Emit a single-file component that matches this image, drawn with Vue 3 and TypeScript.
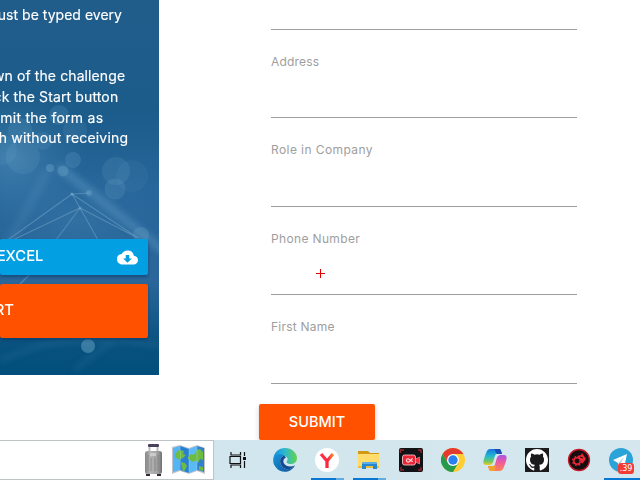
<script setup lang="ts">
interface Line { text: string; end: number; spacing: number; gap?: boolean }
const lines: Line[] = [
  { text: 'spreadsheet record must be typed every', end: 122, spacing: 0.02 },
  { text: 'The actual countdown of the challenge', end: 125.2, spacing: 0.1, gap: true },
  { text: 'will begin when you click the Start button', end: 118.3, spacing: 0.13 },
  { text: 'until then you may submit the form as', end: 103.3, spacing: 0.25 },
  { text: 'many times as you wish without receiving', end: 128.2, spacing: 0.18 },
]
interface Field { label: string; height: number; spacing: number }
const fields: Field[] = [
  { label: 'Address', height: 88, spacing: 0.2 },
  { label: 'Role in Company', height: 89, spacing: 0.42 },
  { label: 'Phone Number', height: 88, spacing: 0.35 },
  { label: 'First Name', height: 89, spacing: 0.22 },
]
const dots = [
  [59, 115, 10, .16], [75, 130, 12, .12], [20, 130, 12, .13], [43, 141, 9, .12], [23, 157, 17, .12],
  [50, 168, 4, .3], [63, 171, 5.5, .25], [73, 160, 8, .17], [116, 171, 14, .13], [132, 176, 16, .07],
  [115, 189, 10.5, .15], [141, 235, 8, .2], [88, 346, 7, .4], [2, 150, 15, .1],
]
</script>

<template>
  <div class="screen">
    <main class="page">
      <aside class="instructions">
        <svg class="backdrop" width="159" height="375" viewBox="0 0 159 375">
          <defs>
            <linearGradient id="sea" x1="0" y1="0" x2="0" y2="1">
              <stop offset="0" stop-color="#215d8b" /><stop offset=".3" stop-color="#1b5c8b" />
              <stop offset=".5" stop-color="#27669a" /><stop offset=".75" stop-color="#2a669a" />
              <stop offset=".93" stop-color="#07517d" /><stop offset="1" stop-color="#024f7b" />
            </linearGradient>
            <radialGradient id="haze"><stop stop-color="#62a1cb" stop-opacity=".42" /><stop offset="1" stop-color="#4788b6" stop-opacity="0" /></radialGradient>
            <filter id="soft"><feGaussianBlur stdDeviation="3" /></filter>
            <filter id="edge"><feGaussianBlur stdDeviation=".45" /></filter>
          </defs>
          <rect width="159" height="375" fill="url(#sea)" />
          <ellipse cx="12" cy="158" rx="75" ry="67" fill="url(#haze)" />
          <ellipse cx="76" cy="220" rx="85" ry="55" fill="url(#haze)" opacity=".4" />
          <g stroke="#70abd0" fill="none" filter="url(#soft)">
            <path d="M58 166 165 252" stroke-width="9" opacity=".32" />
            <path d="M49 169 8 244" stroke-width="9" opacity=".15" />
            <path d="M0 361q72-35 160-15M74 370 114 340" stroke-width="5" opacity=".13" />
          </g>
          <g stroke="#8dbad9" fill="none" opacity=".38" filter="url(#edge)">
            <path d="M72 194-2 247M72 194l8 14 18 32M80 208-2 247M80 208 56 240M72 194l66 44M80 208l58 30M72 194l17-1" stroke-width="1.1" />
            <path d="M20 284 34 270" stroke-width="1.5" />
          </g>
          <g fill="#83b9d9" filter="url(#edge)">
            <circle v-for="(d, i) in dots" :key="i" :cx="d[0]" :cy="d[1]" :r="d[2]" :opacity="d[3]" />
            <circle cx="72" cy="194" r="1.6" opacity=".55" /><circle cx="80" cy="208" r="1.6" opacity=".4" /><circle cx="89" cy="193" r="3" opacity=".3" />
          </g>
        </svg>
        <div class="content">
          <div class="copy">
            <p v-for="l in lines" :key="l.text" :class="{ gap: l.gap }" :style="{ width: l.end + 'px', letterSpacing: l.spacing + 'px' }"><span>{{ l.text }}</span></p>
          </div>
          <div class="actions">
            <a class="btn excel"><span>DOWNLOAD EXCEL</span>
              <svg width="21" height="21" viewBox="0 0 24 24"><path fill="#fff" d="M19.35 10.04A7.49 7.49 0 0 0 12 4C9.11 4 6.6 5.64 5.35 8.04A5.994 5.994 0 0 0 0 14c0 3.31 2.69 6 6 6h13c2.76 0 5-2.24 5-5 0-2.64-2.05-4.78-4.65-4.96zM17 13l-5 5-5-5h3V9h4v4h3z" /></svg>
            </a>
            <button class="btn start"><span>START</span></button>
          </div>
        </div>
      </aside>
      <form class="form" @submit.prevent>
        <div class="field first"></div>
        <label v-for="f in fields" :key="f.label" class="field" :style="{ height: f.height + 'px', letterSpacing: f.spacing + 'px' }"><span>{{ f.label }}</span></label>
        <button class="submit">SUBMIT</button>
      </form>
      <svg class="cursor" width="9" height="9" viewBox="0 0 9 9"><path d="M4 0h1v4h4v1H5v4H4V5H0V4h4z" fill="#e00000" /></svg>
    </main>

    <footer class="taskbar">
      <div class="search">
        <svg width="21" height="34" viewBox="0 0 21 34">
          <defs><linearGradient id="case"><stop stop-color="#858585" /><stop offset=".3" stop-color="#b5b5b5" /><stop offset=".75" stop-color="#a0a0a0" /><stop offset="1" stop-color="#707070" /></linearGradient></defs>
          <path d="M6.5 9V3h8v6" fill="none" stroke="#bbb" stroke-width="2" /><rect x="5" y="1" width="11" height="3" rx="1" fill="#49405c" />
          <rect x="2" y="8" width="17" height="23" rx="2.5" fill="url(#case)" /><path d="M5 12v16M8 15v13M12 15v13M15 12v16" stroke="#828282" stroke-width=".8" /><rect x="7" y="10" width="6" height="3" fill="#cec8cf" /><path d="M3 31h4v2H3zM14 31h4v2h-4z" fill="#302b38" />
        </svg>
        <svg width="36" height="34" viewBox="0 0 36 34">
          <path d="m1 4 8-2 9 3 8-3 8 3v26l-8-3-8 3-9-3-8 3z" fill="#c2c2ca" />
          <path d="m2 5 7-2v24l-7 2z" fill="#55b5f4" /><path d="m9 3 9 3v24l-9-3z" fill="#2681d2" /><path d="m18 6 8-3v24l-8 3z" fill="#5abaf6" /><path d="m26 3 7 2v24l-7-2z" fill="#347fc9" />
          <path d="m4 11 4-4 5 1-1 3 3 1-3 3-3 1 1 2-3-2-3-2zM10 19l4 1 2 3-2 4-2 2-1-5zM17 14l3-3 3 1 3-5 3-1 3 3v8l-3-1-2 4-2-3-3 2-3-2-2-1zM28 23l4 1v4l-4-1z" fill="#6dbc42" />
          <path d="m9 3 1 24M18 6v24M26 3v24" stroke="#d4e2ea" opacity=".3" />
        </svg>
      </div>
      <div class="item task"><svg width="18" height="18" viewBox="0 0 18 18" fill="none" stroke="#111" stroke-width="1.2"><path d="M2 1v3h9.5V1M2 17v-3h9.5v3M1 5.5h10.5v7H1zM15.5 1v4M15.5 10v7" /><path d="M14 6h3v3h-3z" fill="#111" stroke="none" /></svg></div>
      <div class="item"><svg class="icon" viewBox="0 0 24 24">
        <defs><linearGradient id="edgeTop"><stop stop-color="#168bd7" /><stop offset=".45" stop-color="#2ab6d5" /><stop offset="1" stop-color="#64d34e" /></linearGradient><linearGradient id="edgeBase" x2="1" y2="1"><stop stop-color="#1695dc" /><stop offset="1" stop-color="#11539b" /></linearGradient></defs>
        <path d="M.3 12C.5 4 6 0 12 0c7 0 12 5 12 10 0 4-3 6-6 6-4 0-5-2-4-3 2-3-1-5-4-5C6 7 2 9 .3 12z" fill="url(#edgeTop)" />
        <path d="M.2 12C1 6 7 5 11 7.5c-5 2-5 8-1 12 4 3 8 2 12-2C18 25 8 26 3 19.5 1 17 .1 15 .2 12z" fill="url(#edgeBase)" /><path d="M11 7.5c-5 2-5 8-1 12 4 3 8 2 12-2-5 2-9 1-11-2-1.5-3 0-5 2-6z" fill="#134b91" />
      </svg></div>
      <div class="item open"><svg class="icon" viewBox="0 0 24 24"><defs><linearGradient id="yandex" x2="1" y2="0"><stop stop-color="#ff334d" /><stop offset=".6" stop-color="#fa263e" /><stop offset="1" stop-color="#ff8a2b" /></linearGradient></defs><circle cx="12" cy="12" r="12" fill="#fff" /><path d="m6 6 6 7 6-7M12 12v8" fill="none" stroke="url(#yandex)" stroke-width="3.3" /></svg></div>
      <div class="item open"><svg class="icon" viewBox="0 0 24 24"><path d="M1 3h10l2 2h9v4H1z" fill="#d29a14" /><path d="M1 6h21v14H1z" fill="#ffdc6b" /><path d="M1 18h21v2H1z" fill="#eebd3c" /><path d="M5 21v-5q0-2 2-2h11q2 0 2 2v5h-4v-3H9v3z" fill="#2687d3" /><path d="M5 16q0-2 2-2h11q2 0 2 2z" fill="#5bafe9" /></svg></div>
      <div class="item"><svg class="icon" viewBox="0 0 24 24"><rect width="24" height="24" rx="2" fill="#111216" /><path d="M1.5 5V2H5M19 2h3v3M22 19v3h-3M5 22H2v-3" stroke="#92272e" fill="none" stroke-width="1.4" /><rect x="3.5" y="7" width="13" height="10" rx="2" fill="#e92536" stroke="#ffd3d7" stroke-width=".8" /><path d="m16.5 11 4-2v7l-4-2z" fill="#f6303d" stroke="#ffb8be" stroke-width=".5" /><path d="m13.5 10.3-3 3.2c-2 2-4-1-2.5-2.4 1.8-1.5 3 1.8 5.8 2.4" fill="none" stroke="#ffdfe1" stroke-width="1.1" /></svg></div>
      <div class="item"><svg class="icon" viewBox="0 0 24 24"><circle cx="12" cy="12" r="12" fill="#ffce32" /><path d="M1.6 6A12 12 0 0 1 22.4 6H12L7 15z" fill="#e33b2e" /><path d="M1.6 6A12 12 0 0 0 12 24l5.2-9H7z" fill="#269a4c" /><circle cx="12" cy="12" r="6" fill="#fff" /><circle cx="12" cy="12" r="4.7" fill="#2980ee" /></svg></div>
      <div class="item"><svg class="icon" viewBox="0 0 24 24"><defs><linearGradient id="cool" x2="0" y2="1"><stop stop-color="#1676de" /><stop offset=".45" stop-color="#22b9cf" /><stop offset=".8" stop-color="#7bc75c" /><stop offset="1" stop-color="#f2ce26" /></linearGradient><linearGradient id="warm" x2="0" y2="1"><stop stop-color="#ab54e5" /><stop offset=".45" stop-color="#ee599f" /><stop offset="1" stop-color="#ff8452" /></linearGradient></defs><path d="M7 1h9c2 0 2 2 3 5h-5c-2 0-2 2-3 5-1 4-2 6-5 6H3c-3 0-3-3-2-6C3 5 4 1 7 1z" fill="url(#cool)" /><path d="M17 23H8c-2 0-2-2-3-5h5c2 0 2-2 3-5 1-4 2-6 5-6h3c3 0 3 3 2 6-2 6-3 10-6 10z" fill="url(#warm)" /><path d="M11 1h5c2 0 2 2 3 5h-5z" fill="#1b4eb6" /><path d="M5 18h5l3-1-2 6H8c-2 0-2-2-3-5z" fill="#f0a22b" /></svg></div>
      <div class="item"><svg class="icon" viewBox="0 0 24 24"><path d="M0 0h24v24H0z" fill="#1b1b1e" /><path transform="translate(1 1) scale(1.375)" fill="#fff" d="M8 0C3.58 0 0 3.58 0 8c0 3.54 2.29 6.53 5.47 7.59.4.07.55-.17.55-.38 0-.19-.01-.82-.01-1.49-2.01.37-2.53-.49-2.69-.94-.09-.23-.48-.94-.82-1.13-.28-.15-.68-.52-.01-.53.63-.01 1.08.58 1.23.82.72 1.21 1.87.87 2.33.66.07-.52.28-.87.51-1.07-1.78-.2-3.64-.89-3.64-3.95 0-.87.31-1.59.82-2.15-.08-.2-.36-1.02.08-2.12 0 0 .67-.21 2.2.82a7.5 7.5 0 0 1 4 0c1.53-1.04 2.2-.82 2.2-.82.44 1.1.16 1.92.08 2.12.51.56.82 1.27.82 2.15 0 3.07-1.87 3.75-3.65 3.95.29.25.54.73.54 1.48 0 1.07-.01 1.93-.01 2.2 0 .21.15.46.55.38A8 8 0 0 0 16 8c0-4.42-3.58-8-8-8z" /></svg></div>
      <div class="item"><svg class="icon" viewBox="0 0 24 24"><circle cx="12" cy="12" r="10.5" fill="#160d11" stroke="#c71928" stroke-width="1.3" /><circle cx="10" cy="13" r="3.2" fill="none" stroke="#ef2635" stroke-width="1.5" /><circle cx="10" cy="13" r="4.5" fill="none" stroke="#ef2635" stroke-width="1.2" stroke-dasharray="1.8 1.8" /><path d="m10 8 4-1 1-2 2 3 2 3-4 5-1-3-2-3z" fill="#ef2635" /><path d="m13 9 3 1" stroke="#160d11" /></svg></div>
      <div class="item telegram"><svg class="icon" viewBox="0 0 24 24"><circle cx="12" cy="12" r="12" fill="#2aa3d8" /><path d="m4 12 14-6-3 14-4-3-2 3v-5z" fill="#fff" /><path d="m9 15 6-6-4 8z" fill="#bcd7e6" /></svg><span class="badge">.39</span></div>
    </footer>
  </div>
</template>

<style>
body { margin: 0; background: #fff; overflow: hidden; }
</style>
<style scoped>
* { box-sizing: border-box; }
.screen { width: 640px; height: 480px; display: grid; grid-template-rows: 440px 40px; overflow: hidden; background: #fff; font-family: Inter, "Liberation Sans", sans-serif; }
.page { position: relative; display: flex; align-items: flex-start; overflow: hidden; }
.instructions { position: relative; width: 159px; height: 375px; overflow: hidden; color: #fff; flex: none; }
.backdrop { position: absolute; inset: 0; }
.content { position: relative; }
.copy { height: 239px; padding-top: 4.4px; font-size: 14px; line-height: 21px; -webkit-text-stroke: .15px #fff; }
.copy p { margin: 0; height: 20.7px; display: flex; justify-content: flex-end; white-space: nowrap; }
.copy .gap { margin-top: 40.3px; }
.actions { display: flex; flex-direction: column; gap: 9px; width: 148px; }
.btn { height: 36px; width: 148px; display: flex; align-items: center; color: #fff; border: 0; border-radius: 2px; box-shadow: 0 2px 3px #002d5c77; white-space: nowrap; font: 500 14.8px Inter, sans-serif; }
.btn span { display: flex; justify-content: flex-end; flex: none; position: relative; top: -1px; }
.excel { background: #039fe3; }
.excel span { width: 43.5px; }
.excel svg { margin-left: 73.5px; flex: none; }
.start { height: 54px; background: #ff5100; padding: 0; }
.start span { width: 14px; }
.form { margin-left: 100px; width: 318px; }
.field { display: block; margin-left: 12px; width: 306px; border-bottom: 1px solid #9e9e9e; color: #9e9e9e; font-size: 12px; line-height: 16px; padding-top: 24px; white-space: nowrap; }
.field.first { height: 30px; }
.submit { display: block; margin-top: 20px; width: 116px; height: 36px; border: 0; border-radius: 2px; color: #fff; background: #ff5100; font: 500 14.5px Inter, sans-serif; padding: 0 0 1px; box-shadow: 0 2px 5px #0003; }
.cursor { position: absolute; left: 316px; top: 269px; }
.taskbar { display: flex; background: linear-gradient(90deg, #cce5ec, #d2e6ee 45%, #d5e6ee); overflow: hidden; }
.search { width: 214px; height: 40px; border: 1px solid #bfc5c7; border-left: 0; background: #fff; display: flex; align-items: center; justify-content: flex-end; gap: 7px; padding-right: 6px; flex: none; }
.item { width: 42px; height: 40px; display: flex; align-items: center; justify-content: center; flex: none; position: relative; }
.task { width: 50px; padding-right: 2px; }
.icon { width: 24px; height: 24px; }
.open::after { content: ""; position: absolute; bottom: 0; left: 5px; width: 33px; height: 2px; background: linear-gradient(90deg, #0878d4 25px, #61abdf 25px); }
.telegram::after { content: ""; position: absolute; bottom: 0; left: 4px; width: 38px; height: 2px; background: #0878d4; }
.badge { position: absolute; left: 18px; top: 23px; width: 16px; height: 11px; border-radius: 3px; background: #f23c34; color: #fff; font: 8px/11px "DejaVu Sans", sans-serif; text-align: center; }
</style>
